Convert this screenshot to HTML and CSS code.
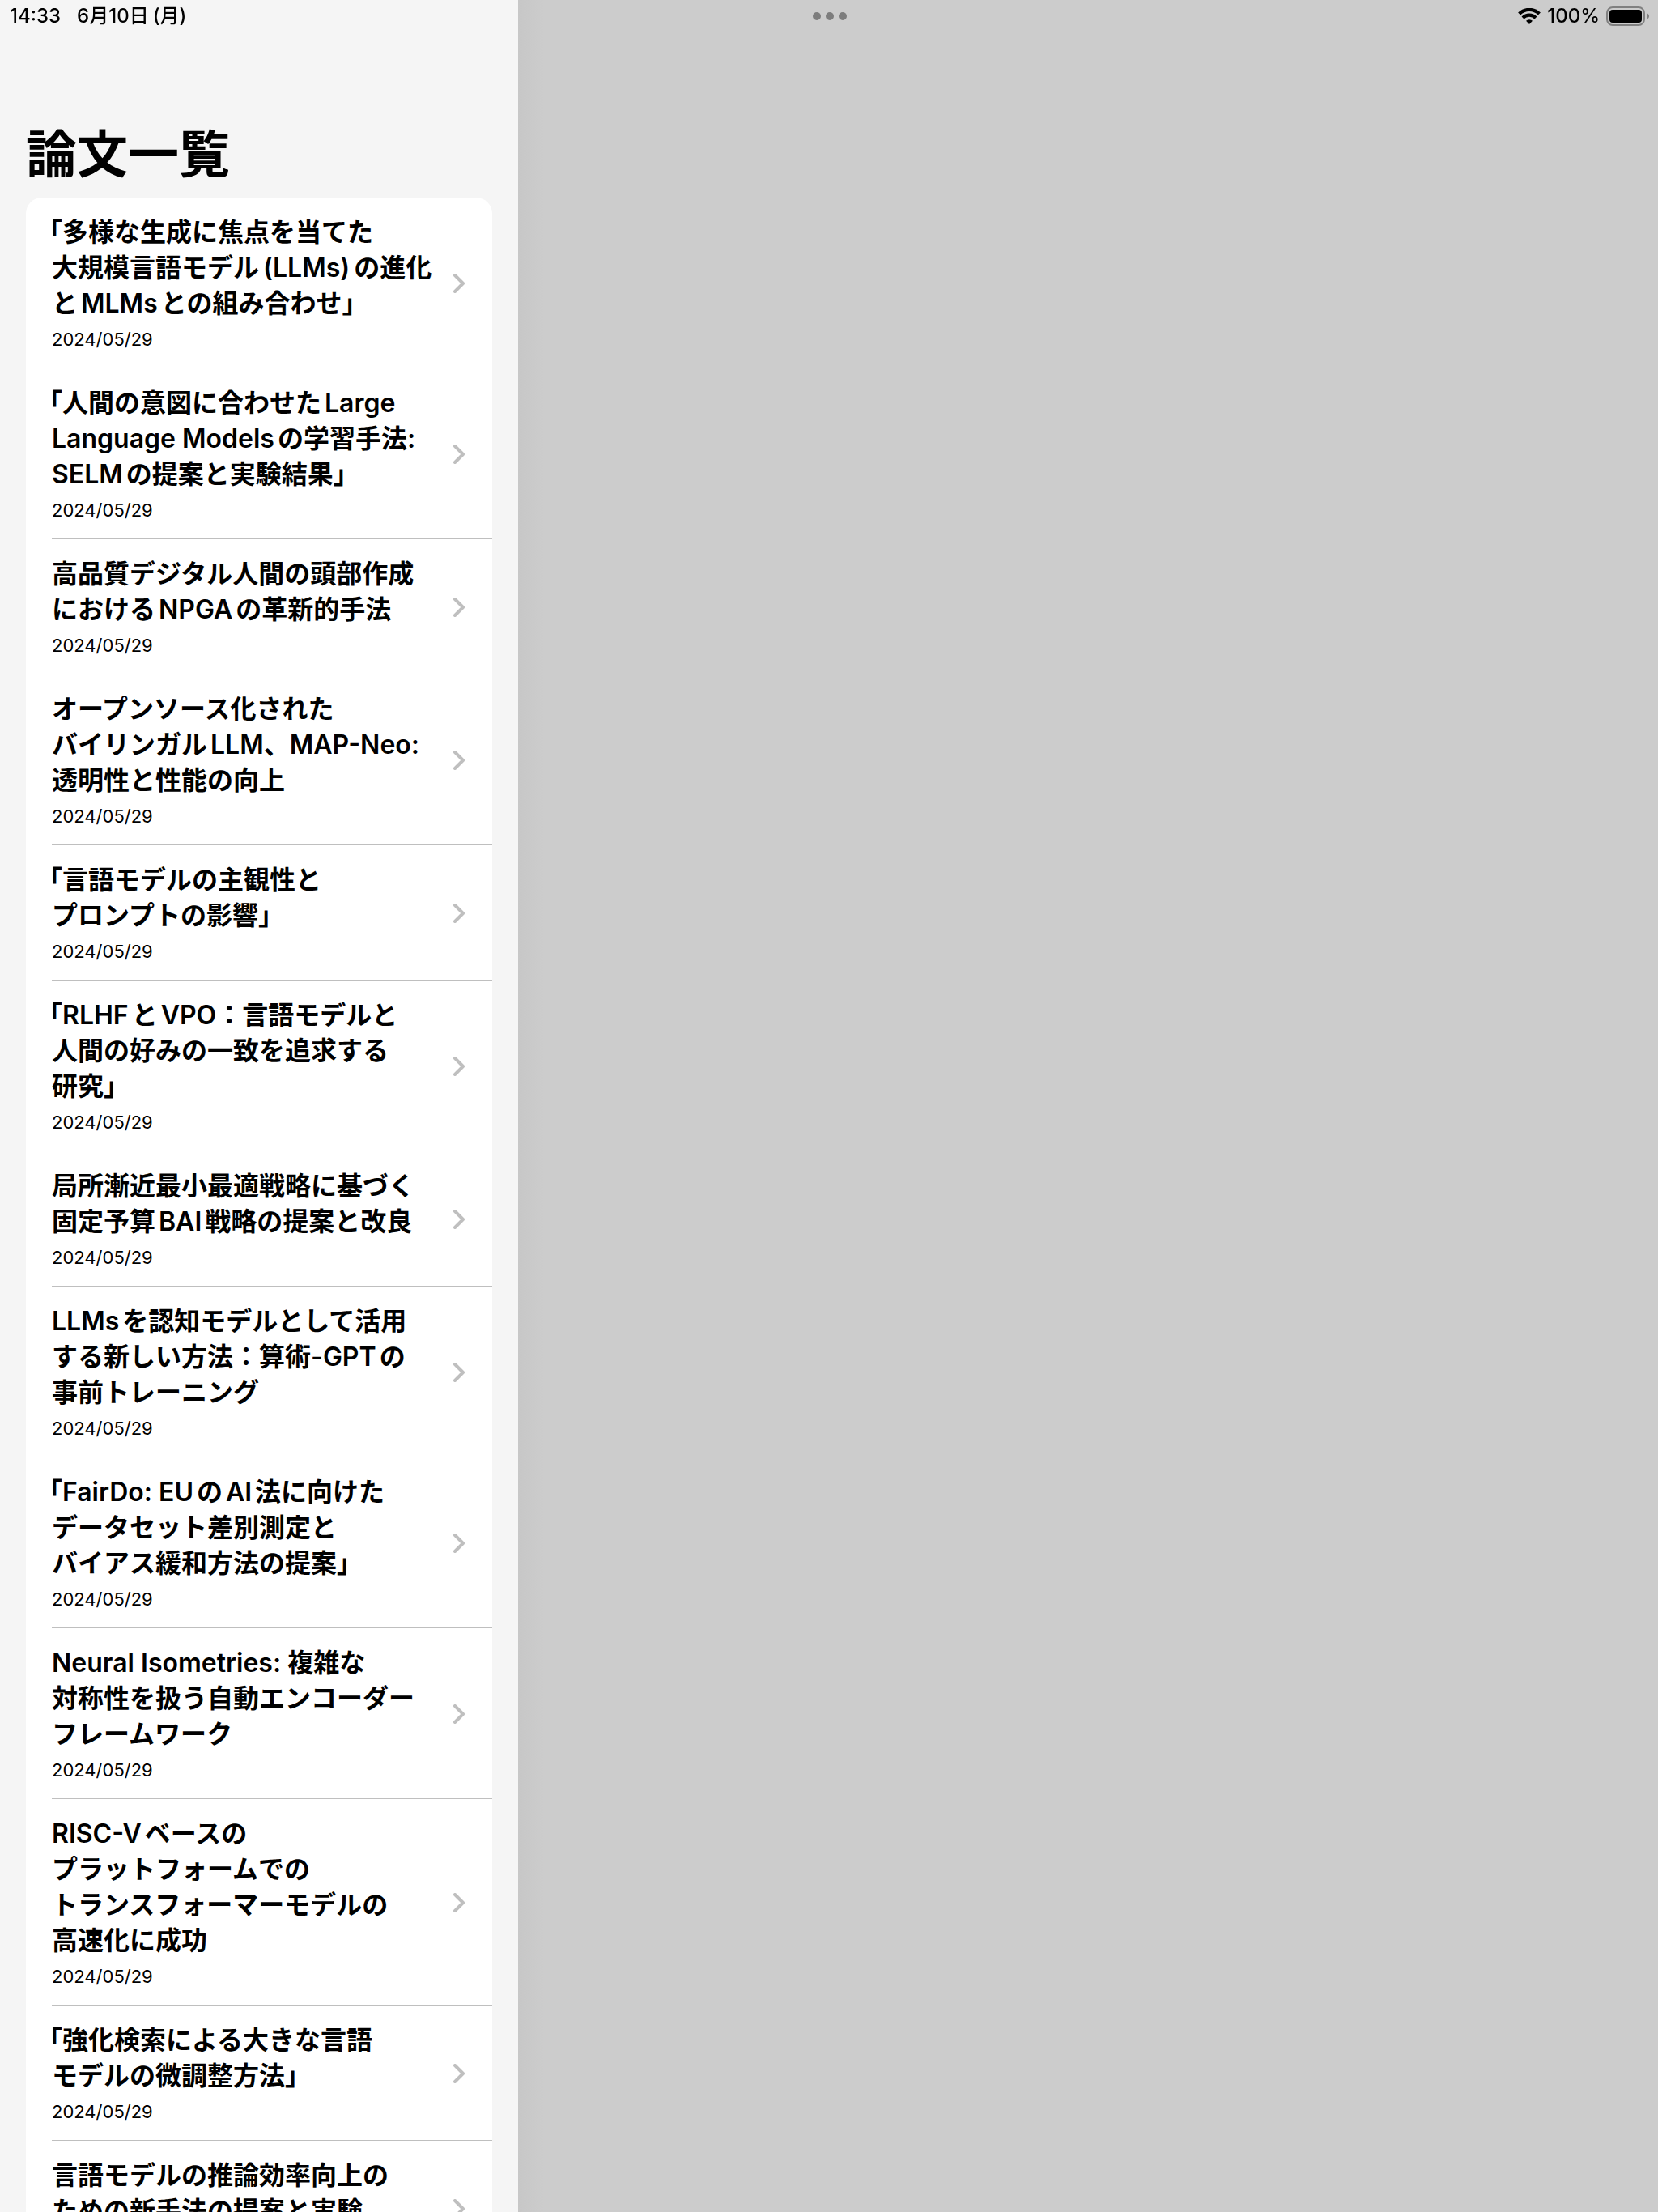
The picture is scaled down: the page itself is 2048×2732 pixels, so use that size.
FILE: index.html
```html
<!DOCTYPE html>
<html lang="ja">
<head>
    <meta charset="UTF-8">
    <meta name="viewport" content="width=device-width, initial-scale=1.0">
    <title>論文一覧</title>
    <link rel="stylesheet" href="styles.css">
</head>
<body>
    <!-- Status bar -->
    <header class="status-bar">
        <div class="status-left">
            <span>14:33</span>
            <span>6月10日<span class="paren-open">(月)</span></span>
        </div>
        <button class="multitask" aria-label="マルチタスク">
            <span class="dot"></span>
            <span class="dot"></span>
            <span class="dot"></span>
        </button>
        <div class="status-right">
            <svg class="wifi" viewBox="0 0 28 20" aria-hidden="true">
                <path d="M1.600 7a17.600 17.600 0 0 1 24.800 0M6 12a11.400 11.400 0 0 1 16 0" fill="none" stroke="#000" stroke-width="4.200"/>
                <path d="M14 20l-4-4.200a5.800 5.800 0 0 1 8 0z"/>
            </svg>
            <span>100%</span>
            <svg class="battery" viewBox="0 0 54 24" aria-hidden="true">
                <rect x="1" y="1" width="46" height="22" rx="7" fill="none" stroke="#808080" stroke-width="2"/>
                <rect x="4" y="4" width="40" height="16" rx="4"/>
                <path d="M50 8c4 1.500 4 6.500 0 8z" fill="#808080"/>
            </svg>
        </div>
    </header>

    <!-- Sidebar -->
    <nav class="sidebar">
        <h1>論文一覧</h1>
        <ul class="paper-list" id="paperList">
            <li><a href="#p1">
                <div class="paper">
                    <h2 class="quoted">「多様な生成に焦点を当てた<br>大規模言語モデル<span class="paren">(LLMs)</span>の進化<br>とMLMsとの組み合わせ」</h2>
                    <time>2024/05/29</time>
                </div>
                <svg class="chevron" viewBox="0 0 14 24"><path d="M2 2l10 10L2 22"/></svg>
            </a></li>
            <li><a href="#p2">
                <div class="paper">
                    <h2 class="quoted">「人間の意図に合わせたLarge<br>Language Modelsの学習手法:<br>SELMの提案と実験結果」</h2>
                    <time>2024/05/29</time>
                </div>
                <svg class="chevron" viewBox="0 0 14 24"><path d="M2 2l10 10L2 22"/></svg>
            </a></li>
            <li><a href="#p3">
                <div class="paper">
                    <h2>高品質デジタル人間の頭部作成<br>におけるNPGAの革新的手法</h2>
                    <time>2024/05/29</time>
                </div>
                <svg class="chevron" viewBox="0 0 14 24"><path d="M2 2l10 10L2 22"/></svg>
            </a></li>
            <li><a href="#p4">
                <div class="paper">
                    <h2>オープンソース化された<br>バイリンガルLLM、MAP-Neo:<br>透明性と性能の向上</h2>
                    <time>2024/05/29</time>
                </div>
                <svg class="chevron" viewBox="0 0 14 24"><path d="M2 2l10 10L2 22"/></svg>
            </a></li>
            <li><a href="#p5">
                <div class="paper">
                    <h2 class="quoted">「言語モデルの主観性と<br>プロンプトの影響」</h2>
                    <time>2024/05/29</time>
                </div>
                <svg class="chevron" viewBox="0 0 14 24"><path d="M2 2l10 10L2 22"/></svg>
            </a></li>
            <li><a href="#p6">
                <div class="paper">
                    <h2 class="quoted">「RLHFとVPO：言語モデルと<br>人間の好みの一致を追求する<br>研究」</h2>
                    <time>2024/05/29</time>
                </div>
                <svg class="chevron" viewBox="0 0 14 24"><path d="M2 2l10 10L2 22"/></svg>
            </a></li>
            <li><a href="#p7">
                <div class="paper">
                    <h2>局所漸近最小最適戦略に基づく<br>固定予算BAI戦略の提案と改良</h2>
                    <time>2024/05/29</time>
                </div>
                <svg class="chevron" viewBox="0 0 14 24"><path d="M2 2l10 10L2 22"/></svg>
            </a></li>
            <li><a href="#p8">
                <div class="paper">
                    <h2>LLMsを認知モデルとして活用<br>する新しい方法：算術-GPTの<br>事前トレーニング</h2>
                    <time>2024/05/29</time>
                </div>
                <svg class="chevron" viewBox="0 0 14 24"><path d="M2 2l10 10L2 22"/></svg>
            </a></li>
            <li><a href="#p9">
                <div class="paper">
                    <h2 class="quoted">「FairDo: EUのAI法に向けた<br>データセット差別測定と<br>バイアス緩和方法の提案」</h2>
                    <time>2024/05/29</time>
                </div>
                <svg class="chevron" viewBox="0 0 14 24"><path d="M2 2l10 10L2 22"/></svg>
            </a></li>
            <li><a href="#p10">
                <div class="paper">
                    <h2>Neural Isometries: 複雑な<br>対称性を扱う自動エンコーダー<br>フレームワーク</h2>
                    <time>2024/05/29</time>
                </div>
                <svg class="chevron" viewBox="0 0 14 24"><path d="M2 2l10 10L2 22"/></svg>
            </a></li>
            <li><a href="#p11">
                <div class="paper">
                    <h2>RISC-Vベースの<br>プラットフォームでの<br>トランスフォーマーモデルの<br>高速化に成功</h2>
                    <time>2024/05/29</time>
                </div>
                <svg class="chevron" viewBox="0 0 14 24"><path d="M2 2l10 10L2 22"/></svg>
            </a></li>
            <li><a href="#p12">
                <div class="paper">
                    <h2 class="quoted">「強化検索による大きな言語<br>モデルの微調整方法」</h2>
                    <time>2024/05/29</time>
                </div>
                <svg class="chevron" viewBox="0 0 14 24"><path d="M2 2l10 10L2 22"/></svg>
            </a></li>
            <li><a href="#p13">
                <div class="paper">
                    <h2>言語モデルの推論効率向上の<br>ための新手法の提案と実験</h2>
                    <time>2024/05/29</time>
                </div>
                <svg class="chevron" viewBox="0 0 14 24"><path d="M2 2l10 10L2 22"/></svg>
            </a></li>
        </ul>
    </nav>

    <!-- Detail area -->
    <main class="detail"></main>
</body>
</html>
```

FILE: styles.css
```css
/* Base styles */
* {
    box-sizing: border-box;
}

body {
    margin: 0;
    font-family: Inter, 'Noto Sans CJK JP', sans-serif;
    color: #000;
    background-color: #ccc;
    display: flex;
    height: 100vh;
    overflow: hidden;
}

/* Status bar */
.status-bar {
    position: fixed;
    top: 0;
    left: 0;
    width: 100%;
    height: 40px;
    padding: 0 10px 0 12px;
    display: grid;
    grid-template-columns: 1fr auto 1fr;
    align-items: center;
    font-size: 24px;
    font-weight: 500;
    line-height: 40px;
    text-autospace: no-autospace;
    z-index: 10;
}

.status-left {
    display: flex;
    gap: 20px;
}

.status-right {
    display: flex;
    justify-content: flex-end;
    align-items: center;
    gap: 8px;
}

.multitask {
    display: flex;
    gap: 6px;
    padding: 0;
    border: none;
    background: none;
}

.dot {
    width: 10px;
    height: 10px;
    border-radius: 50%;
    background-color: #7d7d7d;
}

.wifi {
    width: 28px;
    height: 20px;
}

.battery {
    width: 54px;
    height: 24px;
}

/* Sidebar */
.sidebar {
    width: 640px;
    flex-shrink: 0;
    padding: 142px 32px 0;
    background-color: #f5f5f5;
    overflow: hidden;
}

h1 {
    margin: 0 0 6px;
    font-size: 63px;
    line-height: 96px;
    font-weight: bold;
}

.paper-list {
    margin: 0;
    padding: 0 0 0 32px;
    list-style: none;
    background-color: #fff;
    border-radius: 20px;
}

.paper-list li {
    border-bottom: 1px solid #bfbfbf;
}

.paper-list a {
    display: flex;
    align-items: center;
    justify-content: space-between;
    padding: 21px 34px 19px 0;
    color: inherit;
    text-decoration: none;
}

.paper {
    display: flex;
    flex-direction: column;
    gap: 6px;
}

.paper h2 {
    margin: 0;
    font-size: 32px;
    line-height: 44px;
    font-weight: 600;
    white-space: nowrap;
    text-autospace: normal;
    text-spacing-trim: trim-start;
}

/* hang the opening bracket a little */
.paper .quoted {
    text-indent: -3px;
}

.paren {
    margin: 0 5px;
}

.paren-open {
    margin-left: 5px;
}

.paper time {
    font-size: 22px;
    line-height: 32px;
}

.chevron {
    width: 14px;
    height: 24px;
    flex-shrink: 0;
    fill: none;
    stroke: #bfbfbf;
    stroke-width: 4;
    stroke-linecap: round;
    stroke-linejoin: round;
}

/* Detail area */
.detail {
    flex: 1;
    background: linear-gradient(to right, #c7c7c7, #ccc 32px);
}
```
